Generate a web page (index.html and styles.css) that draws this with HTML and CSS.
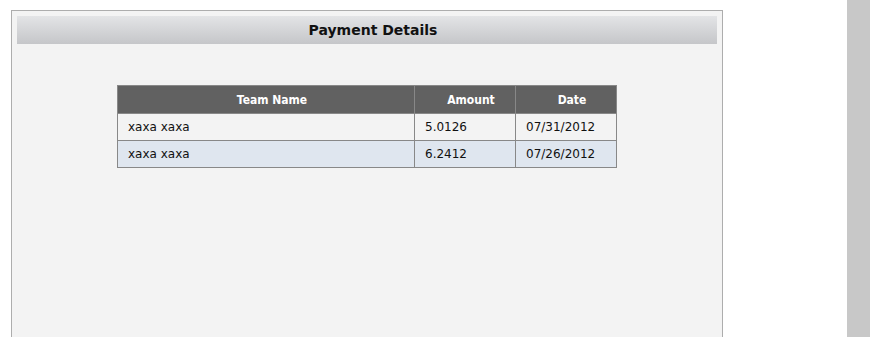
FILE: index.html
```html
<!DOCTYPE html>
<html>
<head>
<meta charset="utf-8">
<link rel="stylesheet" href="styles.css">
</head>
<body>
<div class="page">
  <div class="panel">
    <div class="panel-title">Payment Details</div>
    <div class="panel-body">
      <table class="grid">
        <thead>
          <tr>
            <th class="col-name">Team Name</th>
            <th class="col-amt">Amount</th>
            <th class="col-date">Date</th>
          </tr>
        </thead>
        <tbody>
          <tr>
            <td>xaxa xaxa</td>
            <td>5.0126</td>
            <td>07/31/2012</td>
          </tr>
          <tr class="alt">
            <td>xaxa xaxa</td>
            <td>6.2412</td>
            <td>07/26/2012</td>
          </tr>
        </tbody>
      </table>
    </div>
  </div>
  <div class="side"></div>
</div>
</body>
</html>
```
FILE: styles.css
```css
html, body {
  margin: 0;
  padding: 0;
  background: #ffffff;
  font-family: "DejaVu Sans", Verdana, sans-serif;
}
.page {
  display: flex;
  height: 337px;
  overflow: hidden;
}
.panel {
  margin: 10px 0 0 11px;
  width: 712px;
  height: 400px;
  border: 1px solid #adadad;
  background: #f3f3f3;
  padding: 5px;
  box-sizing: border-box;
  flex: none;
}
.panel-title {
  height: 28px;
  line-height: 28px;
  background: linear-gradient(to bottom, #e3e4e6, #c5c6c9);
  text-align: center;
  font-weight: bold;
  font-size: 14px;
  color: #111;
  padding-left: 12px;
}
.panel-body {
  display: flex;
  justify-content: center;
  padding-top: 41px;
}
.grid {
  width: 500px;
  border-collapse: collapse;
  border: 1px solid #888;
  font-size: 12px;
}
.grid th {
  background: #616161;
  color: #fff;
  font-family: "DejaVu Sans Condensed", "DejaVu Sans", sans-serif;
  font-weight: bold;
  height: 27px;
  padding: 0 0 0 12px;
  border: 1px solid #888;
  text-align: center;
}
.col-name { width: 284px; }
.col-amt { width: 88px; }
.grid td {
  height: 26px;
  padding: 0 10px;
  border: 1px solid #888;
  color: #111;
  background: #f3f3f3;
}
.grid tr.alt td {
  background: #dfe6ef;
}
.side {
  margin-left: auto;
  width: 23px;
  background: #c8c8c8;
  flex: none;
}
```
